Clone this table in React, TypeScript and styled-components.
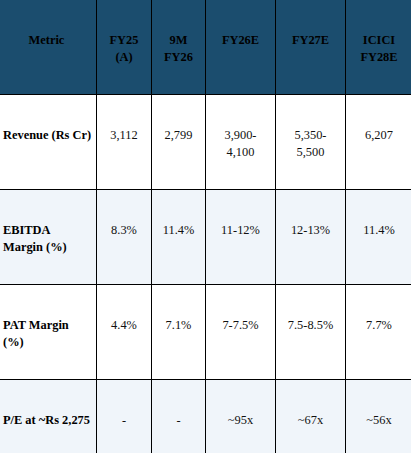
import React from 'react';
import styled, { createGlobalStyle } from 'styled-components';

type Row = {
  metric: string[];
  values: string[][];
};

const columns = [
  { label: ['Metric'], width: 100 },
  { label: ['FY25', '(A)'], width: 55 },
  { label: ['9M', 'FY26'], width: 54 },
  { label: ['FY26E'], width: 70 },
  { label: ['FY27E'], width: 70 },
  { label: ['ICICI', 'FY28E'], width: 67 },
];

const rows: Row[] = [
  {
    metric: ['Revenue (Rs Cr)'],
    values: [['3,112'], ['2,799'], ['3,900-', '4,100'], ['5,350-', '5,500'], ['6,207']],
  },
  {
    metric: ['EBITDA', 'Margin (%)'],
    values: [['8.3%'], ['11.4%'], ['11-12%'], ['12-13%'], ['11.4%']],
  },
  {
    metric: ['PAT Margin', '(%)'],
    values: [['4.4%'], ['7.1%'], ['7-7.5%'], ['7.5-8.5%'], ['7.7%']],
  },
  {
    metric: ['P/E at ~Rs 2,275'],
    values: [['-'], ['-'], ['~95x'], ['~67x'], ['~56x']],
  },
];

const Lines = ({ lines }: { lines: string[] }) => (
  <>
    {lines.map((line, i) => (
      <Line key={i}>{line}</Line>
    ))}
  </>
);

const App = () => (
  <>
    <GlobalStyle />
    <Table>
      <colgroup>
        {columns.map((c, i) => (
          <col key={i} style={{ width: c.width }} />
        ))}
      </colgroup>
      <thead>
        <tr>
          {columns.map((c, i) => (
            <HeadCell key={i}>
              <Lines lines={c.label} />
            </HeadCell>
          ))}
        </tr>
      </thead>
      <tbody>
        {rows.map((row, r) => (
          <BodyRow key={r} $shaded={r % 2 === 1}>
            <MetricCell>
              <Lines lines={row.metric} />
            </MetricCell>
            {row.values.map((v, i) => (
              <ValueCell key={i}>
                <Lines lines={v} />
              </ValueCell>
            ))}
          </BodyRow>
        ))}
      </tbody>
    </Table>
  </>
);

const GlobalStyle = createGlobalStyle`
  html, body {
    margin: 0;
    padding: 0;
    background: #fff;
    overflow: hidden;
  }
  body {
    font-family: "Liberation Serif", "Times New Roman", serif;
    font-size: 12.4px;
    color: #000;
  }
`;

const Table = styled.table`
  table-layout: fixed;
  border-collapse: collapse;
  width: 416px;
  margin: -1px 0 0 -4px;
  line-height: 17px;
  font-size: 12.4px;
`;

const Line = styled.div`
  white-space: nowrap;
`;

const Cell = styled.td`
  border: 1px solid #000;
  padding: 32px 6px 28px;
  vertical-align: top;
  text-align: center;
`;

const HeadCell = styled(Cell).attrs({ as: 'th' })`
  background: #1b4d6e;
  color: #000;
  font-weight: 700;
`;

const BodyRow = styled.tr<{ $shaded: boolean }>`
  background: ${(p) => (p.$shaded ? '#f0f5fa' : '#fff')};
`;

const MetricCell = styled(Cell)`
  text-align: left;
  font-weight: 700;
`;

const ValueCell = styled(Cell)`
  color: #111;
`;

export default App;
